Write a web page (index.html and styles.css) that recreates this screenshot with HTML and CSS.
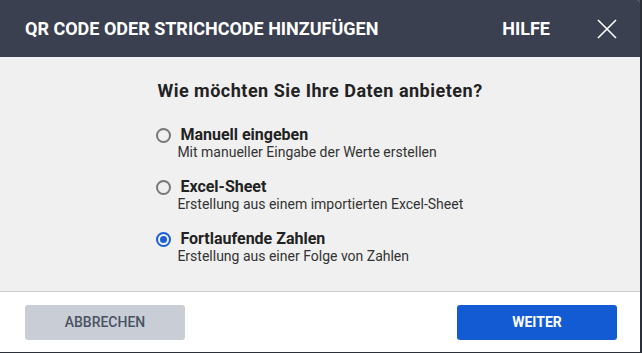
FILE: index.html
```html
<!DOCTYPE html>
<html lang="de">
<head>
<meta charset="utf-8">
<link rel="stylesheet" href="styles.css">
</head>
<body>
<div class="dialog">
  <header class="head">
    <h1 class="title">QR CODE ODER STRICHCODE HINZUFÜGEN</h1>
    <a class="help">HILFE</a>
    <button class="close" aria-label="Schließen">
      <svg width="20" height="20" viewBox="0 0 20 20"><path d="M1 1L19 19M19 1L1 19" stroke="#fff" stroke-width="1.6" fill="none"/></svg>
    </button>
  </header>
  <main class="body">
    <div class="content">
      <h2 class="question">Wie möchten Sie Ihre Daten anbieten?</h2>
      <div class="options">
        <label class="option">
          <span class="radio"></span>
          <span class="texts">
            <span class="opt-title">Manuell eingeben</span>
            <span class="opt-desc">Mit manueller Eingabe der Werte erstellen</span>
          </span>
        </label>
        <label class="option">
          <span class="radio"></span>
          <span class="texts">
            <span class="opt-title">Excel-Sheet</span>
            <span class="opt-desc">Erstellung aus einem importierten Excel-Sheet</span>
          </span>
        </label>
        <label class="option">
          <span class="radio checked"></span>
          <span class="texts">
            <span class="opt-title">Fortlaufende Zahlen</span>
            <span class="opt-desc">Erstellung aus einer Folge von Zahlen</span>
          </span>
        </label>
      </div>
    </div>
  </main>
  <footer class="foot">
    <button class="btn btn-cancel">ABBRECHEN</button>
    <button class="btn btn-next">WEITER</button>
  </footer>
</div>
</body>
</html>
```
FILE: styles.css
```css
* { box-sizing: border-box; }
html, body { margin: 0; padding: 0; }
body {
  width: 642px;
  height: 353px;
  background: #2b2f38;
  font-family: Roboto, "Liberation Sans", sans-serif;
  overflow: hidden;
}
.dialog {
  width: 640px;
  height: 352px;
  display: flex;
  flex-direction: column;
  background: #fff;
  border-top-right-radius: 3px;
  overflow: hidden;
}
.head {
  height: 57px;
  flex: none;
  background: #3a4050;
  display: flex;
  align-items: center;
  padding: 0 23px 0 25px;
}
.title {
  margin: 0;
  flex: 1;
  color: #fff;
  font-size: 18px;
  font-weight: 700;
  letter-spacing: 0;
}
.help {
  color: #fff;
  font-size: 18px;
  font-weight: 700;
  margin-right: 47px;
}
.close {
  border: 0;
  padding: 0;
  background: none;
  width: 20px;
  height: 20px;
  display: flex;
}
.body {
  flex: 1;
  background: #f0f0f0;
  border-bottom: 1px solid #cfcfcf;
  display: flex;
  justify-content: center;
}
.content {
  padding-top: 23px;
}
.question {
  margin: 0 0 24px;
  font-size: 18px;
  font-weight: 700;
  color: #222;
  letter-spacing: 0.5px;
}
.options {
  display: flex;
  flex-direction: column;
  gap: 16px;
}
.option {
  display: flex;
  align-items: center;
  gap: 9px;
}
.radio {
  width: 15px;
  height: 15px;
  border: 2px solid #777;
  border-radius: 50%;
  flex: none;
  margin-top: -16px;
  margin-left: -1px;
  position: relative;
}
.radio.checked {
  border-color: #1a5fd6;
}
.radio.checked::after {
  content: "";
  position: absolute;
  left: 2px;
  top: 2px;
  width: 7px;
  height: 7px;
  border-radius: 50%;
  background: #1a5fd6;
}
.texts {
  display: flex;
  flex-direction: column;
}
.opt-title {
  font-size: 16px;
  font-weight: 700;
  color: #222;
  line-height: 19px;
}
.opt-desc {
  font-size: 14px;
  color: #333;
  line-height: 17px;
  margin-left: -3px;
}
.foot {
  height: 60px;
  flex: none;
  background: #fff;
  display: flex;
  justify-content: space-between;
  align-items: center;
  padding: 0 23px 0 25px;
}
.btn {
  width: 160px;
  height: 35px;
  border: 0;
  border-radius: 3px;
  font-family: Roboto, "Liberation Sans", sans-serif;
  font-size: 14px;
  font-weight: 500;
}
.btn-cancel {
  background: #c9ced6;
  color: #4a5263;
}
.btn-next {
  background: #135bd3;
  color: #fff;
  font-weight: 700;
}
```
